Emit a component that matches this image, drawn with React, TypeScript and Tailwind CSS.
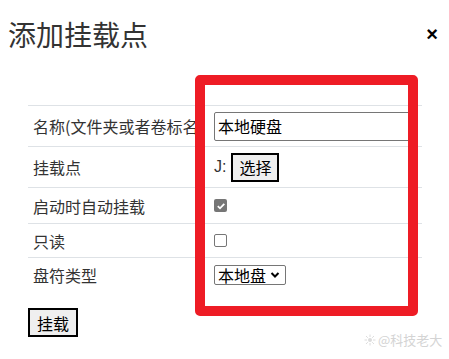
import React from "react";

const rows = [
  { label: "名称(文件夹或者卷标名称)", h: "h-[41px]", kind: "input" },
  { label: "挂载点", h: "h-[41px]", kind: "pick" },
  { label: "启动时自动挂载", h: "h-[36px]", kind: "checked" },
  { label: "只读", h: "h-[34px]", kind: "unchecked" },
  { label: "盘符类型", h: "h-[35px]", kind: "select" },
];

function Value({ kind }: { kind: string }) {
  if (kind === "input")
    return (
      <div className="flex h-[29px] w-[200px] items-center rounded-[2px] border border-[#767676] px-[3px] text-[16px] leading-[20px] text-black">
        本地硬盘
      </div>
    );
  if (kind === "pick")
    return (
      <div className="flex items-center gap-[5px]">
        <span className="font-['Liberation_Sans',sans-serif] text-[16px] text-[#333]">J:</span>
        <button className="flex h-[29px] items-center border-2 border-black bg-[#efefef] px-[6px] text-[16px] leading-[20px] text-black">
          选择
        </button>
      </div>
    );
  if (kind === "checked")
    return (
      <span className="flex h-[13px] w-[13px] items-center justify-center rounded-[2px] bg-[#767676]">
        <svg width="10" height="10" viewBox="0 0 10 10">
          <path d="M1.8 5.2 L4 7.3 L8.3 2.8" fill="none" stroke="white" strokeWidth="1.8" />
        </svg>
      </span>
    );
  if (kind === "unchecked")
    return <span className="block h-[13px] w-[13px] rounded-[2px] border border-[#767676] bg-white" />;
  return (
    <div className="flex h-[20px] w-[72px] items-center gap-[4px] rounded-[2px] border border-[#767676] pl-[3px] text-[16px] leading-[18px] text-black">
      本地盘
      <svg width="10" height="8" viewBox="0 0 10 8">
        <path d="M1.5 2 L5 5.5 L8.5 2" fill="none" stroke="black" strokeWidth="2" />
      </svg>
    </div>
  );
}

export default function App() {
  return (
    <div className="relative h-[359px] w-[449px] overflow-hidden bg-white font-['Noto_Sans_CJK_SC',sans-serif] text-[#333]">
      <div className="flex items-center justify-between pl-[8px] pr-[11px] pt-[17px]">
        <h1 className="text-[28px] font-normal leading-[34px] text-[#333]">添加挂载点</h1>
        <span className="font-['Liberation_Sans',sans-serif] text-[20px] font-bold leading-[20px] text-black">×</span>
      </div>

      <div className="ml-[28px] mt-[54px] w-[394px]">
        {rows.map((r) => (
          <div key={r.label} className={`flex items-center border-t border-[#dee2e6] ${r.h}`}>
            <div className="w-[181px] shrink-0 pl-[5px]">
              <div className="w-[168px] overflow-hidden whitespace-nowrap text-[16px] leading-[20px]">
                {r.label}
              </div>
            </div>
            <div className="pl-[5px]">
              <Value kind={r.kind} />
            </div>
          </div>
        ))}
        <button className="mt-[16px] flex h-[29px] items-center border-2 border-black bg-[#efefef] px-[7px] text-[16px] leading-[20px] text-black">
          挂载
        </button>
      </div>

      <div className="absolute left-[195px] top-[75px] h-[241px] w-[223px] rounded-[5px] border-[10px] border-[#ee1c25]" />

      <div className="absolute left-[364px] top-[332px] flex items-center gap-[2px] text-[13px] leading-[16px] text-[#d4d4d4]">
        <svg width="12" height="12" viewBox="0 0 12 12">
          <circle cx="6" cy="6" r="2" fill="#dcdcdc" />
          <path d="M6 0.5V3M6 9V11.5M0.5 6H3M9 6H11.5M2 2L3.8 3.8M8.2 8.2L10 10M10 2L8.2 3.8M3.8 8.2L2 10" stroke="#dcdcdc" strokeWidth="1" />
        </svg>
        <span>@科技老大</span>
      </div>
    </div>
  );
}
